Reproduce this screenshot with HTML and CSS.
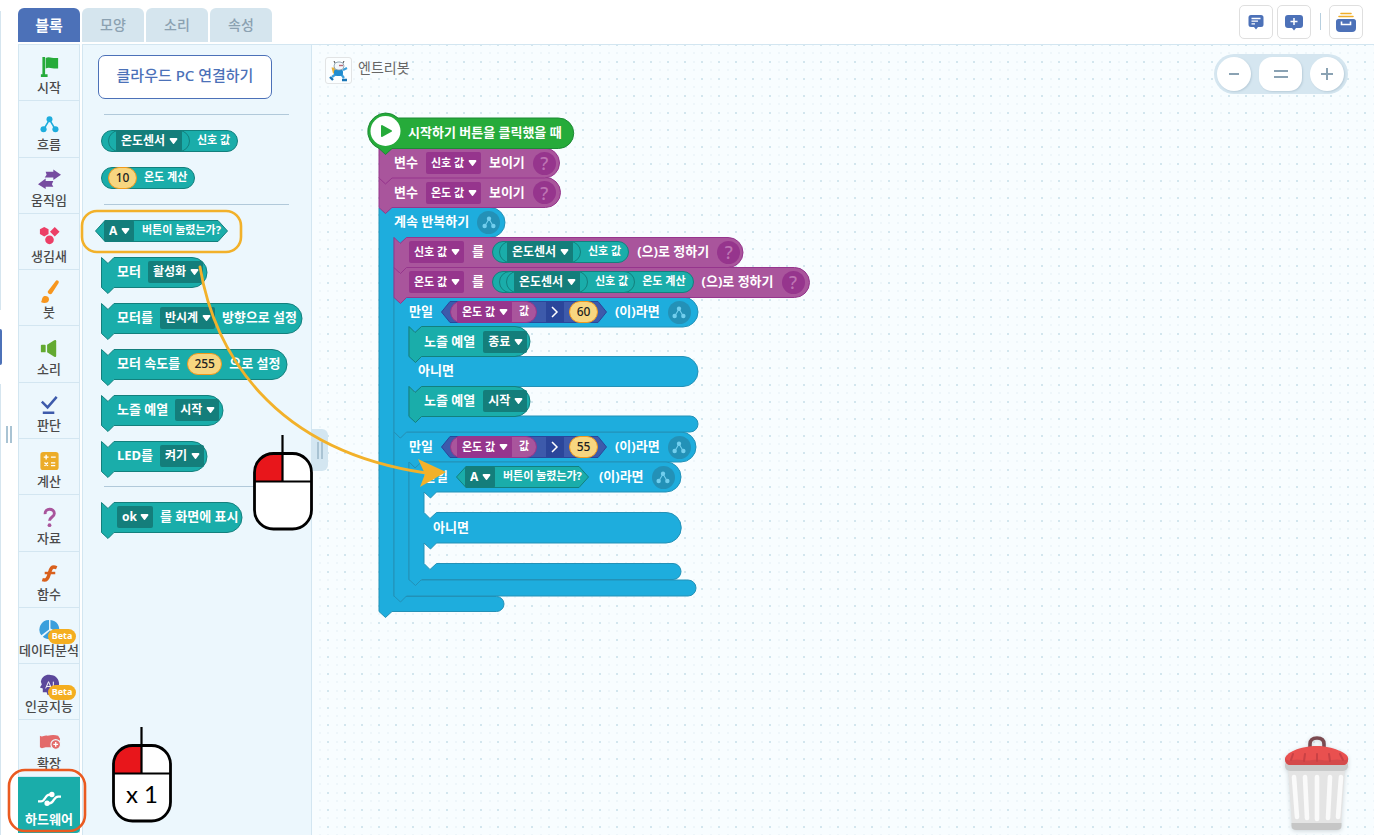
FILE: index.html
```html
<!DOCTYPE html>
<html lang="ko">
<head>
<meta charset="utf-8">
<title>엔트리 블록 코딩</title>
<link rel="stylesheet" href="styles.css">
</head>
<body>
<svg class="defs" aria-hidden="true">
  <symbol id="flow" viewBox="0 0 20 18"><path d="M10 4 4 14M10 4l6 10" stroke="currentColor" stroke-width="1.600" fill="none"/><circle cx="10" cy="3.600" r="3.100" fill="currentColor"/><circle cx="3.800" cy="14" r="3.200" fill="currentColor"/><circle cx="16.200" cy="14" r="3.200" fill="currentColor"/></symbol>
  <symbol id="mouse" viewBox="0 0 60 96"><rect x="1.500" y="18.500" width="57" height="75.500" rx="18" fill="#fff"/><path d="M29.500 18.500H20A18.500 18.500 0 0 0 1.500 37v9h28z" fill="#e8161b"/><rect x="1.500" y="18.500" width="57" height="75.500" rx="19" fill="none" stroke="#000" stroke-width="2.800"/><path d="M29.500 0v46M1 46.500h58" stroke="#000" stroke-width="2.200" fill="none"/></symbol>
</svg>

<div class="app">
  <aside class="edge"><span class="edge-panel"></span><span class="edge-active"></span><span class="edge-panel"></span><button class="grip" aria-label="무대 크기 조절"></button></aside>

  <div class="main">
    <header class="top">
      <nav class="tabs">
        <button class="tab active">블록</button><button class="tab">모양</button><button class="tab">소리</button><button class="tab">속성</button>
      </nav>
      <div class="actions">
        <button class="tool" aria-label="메모"><svg width="18" height="16" viewBox="0 0 18 16"><path d="M4 1h10a2.500 2.500 0 0 1 2.500 2.500v7A2.500 2.500 0 0 1 14 13h-3l-2 2.500L7 13H4a2.500 2.500 0 0 1-2.500-2.500v-7A2.500 2.500 0 0 1 4 1z" fill="#4c71b8"/><path d="M4.500 4.500h9M4.500 7.200h6.500M4.500 9.800H8" stroke="#fff" stroke-width="1.300"/></svg></button>
        <button class="tool" aria-label="메모 추가"><svg width="20" height="17" viewBox="0 0 20 17"><path d="M4 1h12a3 3 0 0 1 3 3v7a3 3 0 0 1-3 3h-4l-2 2.500L8 14H4a3 3 0 0 1-3-3V4a3 3 0 0 1 3-3z" fill="#4c71b8"/><path d="M10 4v7M6.500 7.500h7" stroke="#fff" stroke-width="1.500"/></svg></button>
        <span class="divider"></span>
        <button class="tool" aria-label="나의 보관함"><svg width="20" height="21" viewBox="0 0 20 21"><path d="M5 1.500h10M3 4.500h14" stroke="#f0ae29" stroke-width="1.600" stroke-linecap="round"/><path d="M2.500 7h15q2.500 0 2.500 2.500V16q0 4-4 4H4q-4 0-4-4V9.500Q0 7 2.500 7z" fill="#4c71b8"/><path d="M5.500 9.500v3h9v-3" stroke="#fff" stroke-width="1.600" fill="none"/></svg></button>
      </div>
    </header>

    <div class="editor">
      <nav class="cats">
        <button class="cat"><svg viewBox="0 0 24 24"><path d="M6 2v20M3 21.500h7" stroke="#26ab3a" stroke-width="2.800"/><path d="M8 3c4-2 7 1 13 0v11c-5 1-9-2-13 0z" fill="#26ab3a"/></svg>시작</button>
        <button class="cat"><svg viewBox="0 0 24 24" color="#1eaddd"><use href="#flow" x="2" y="4" width="20" height="18"/></svg>흐름</button>
        <button class="cat"><svg viewBox="0 0 24 24" fill="#764ba0"><path d="M8 4h8V1.500L24 7l-8 5.500V10H7l2-3zM16 13.500H8V11L0 17l8 5v-2.500h8L14.500 17z"/></svg>움직임</button>
        <button class="cat"><svg viewBox="0 0 24 24" fill="#ec3f66"><path d="m6.500 3 4.500 2.500v5L6.500 13 2 10.500v-5zM17.500 3l5 5-5 5-5-5z"/><circle cx="12" cy="16.500" r="4.500"/></svg>생김새</button>
        <button class="cat"><svg viewBox="0 0 24 24" fill="#f7961e"><path d="M18.500 1c1-1.500 4 0 3 2l-7 11c-1.500 2-5.500 0-4-2.500zM3 23c1.500-1 .5-3 2-5 1.500-2.500 6.500-1.500 6.500 2 0 4-5 5-8.500 3z"/></svg>붓</button>
        <button class="cat"><svg viewBox="0 0 24 24" fill="#63aa31"><rect x="3" y="8" width="5" height="8" rx="1"/><path d="M9.500 8 17 3.500q2-1 2 1v15q0 2-2 1L9.500 16z"/></svg>소리</button>
        <button class="cat"><svg viewBox="0 0 24 24" fill="none" stroke="#3d5aab" stroke-width="2.600"><path d="m4 9 6 6L19.500 4M5 20.500h12"/></svg>판단</button>
        <button class="cat"><svg viewBox="0 0 24 24"><rect x="2.500" y="3" width="19" height="19" rx="3" fill="#ecac29"/><path d="M6 8.500h5M8.500 6v5M13.500 8.500h5M6.800 14l3.600 3.600M10.400 14l-3.600 3.600M13.500 14.500h4.500M13.500 17.300h4.500" stroke="#fff" stroke-width="1.400"/></svg>계산</button>
        <button class="cat"><svg viewBox="0 0 24 24"><path d="M7.500 8.500c-1-7 10-6.500 9.500-.5 0 3.500-5 3.500-5 7.500" fill="none" stroke="#a9559c" stroke-width="3"/><circle cx="12" cy="20" r="2" fill="#a9559c"/></svg>자료</button>
        <button class="cat"><svg viewBox="0 0 24 24" fill="none" stroke="#d9601c"><path d="M19.500 6c-6-2.500-6.500 2-8 7-1 4-2.500 7-7 5.500" stroke-width="3.600"/><path d="M7 11.500h11" stroke-width="2.600"/></svg>함수</button>
        <button class="cat"><svg viewBox="0 0 24 24" fill="#3b9fdc"><path d="M11.500 12V2A10 10 0 0 0 3.500 18zM13 11V2a10 10 0 0 1 8.500 13.500zM12.500 13l8 4A10 10 0 0 1 5 19.500z"/></svg><i class="beta">Beta</i>데이터분석</button>
        <button class="cat"><svg viewBox="0 0 24 24"><path d="M3 8C4 2 9 0 13 1c6 0 9 5 9 9 0 5-3 7-3 12h-9l-1-3H5v-4l-3-1 2-3z" fill="#5b489b"/><path d="m8 15 3-7 3 7M9 13h4M16 8v7" stroke="#fff" fill="none"/></svg><i class="beta">Beta</i>인공지능</button>
        <button class="cat"><svg viewBox="0 0 24 24"><path d="M2 5c3 2 4-1 8 0 4-1 8-1 11 0l2 3-1 9H8l-4 1-2-1z" fill="#e36a6a"/><circle cx="18.500" cy="14" r="5" fill="#e36a6a" stroke="#ecf7fd" stroke-width="1.200"/><path d="M18.500 11.500v5M16 14h5" stroke="#fff" stroke-width="1.400"/></svg>확장</button>
        <button class="cat selected"><svg viewBox="0 0 24 24" fill="none" stroke="#fff" stroke-width="2.400"><path d="M0 15h3c5 0 4-7 9-7h2M24 10h-3c-5 0-4 7-9 7h-2"/><circle cx="14.500" cy="7.800" r="1.600" fill="#fff"/><circle cx="9.500" cy="17" r="1.600" fill="#fff"/></svg>하드웨어</button>
      </nav>

      <section class="palette">
        <button class="cloud">클라우드 PC 연결하기</button>
        <hr>
        <div class="pill teal"><div class="pill teal"><select aria-label="센서"><option>온도센서</option></select></div><span>신호 값</span></div>
        <div class="pill teal second"><input class="num" aria-label="온도 값" value="10"><span>온도 계산</span></div>
        <hr>
        <div class="hex button-hex"><svg width="133" height="22"><path class="c-teal" d="M.5 11 10 .5h113L132.500 11 123 21.500H10z"/></svg><div class="hex-body teal"><select aria-label="버튼"><option>A</option></select><span>버튼이 눌렸는가?</span></div></div>

        <div class="stmts">
        <div class="stmt teal"><svg><path class="c-teal" d="M.5.5 7 6.500l6-6h78a15 15 0 0 1 0 30H13l-6 6-6.500-6z"/></svg><div class="body"><span>모터</span><select aria-label="상태"><option>활성화</option></select></div></div>
        <div class="stmt teal"><svg><path class="c-teal" d="M.5.5 7 6.500l6-6h173a15 15 0 0 1 0 30H13l-6 6-6.500-6z"/></svg><div class="body"><span>모터를</span><select aria-label="방향"><option>반시계</option></select><span>방향으로 설정</span></div></div>
        <div class="stmt teal"><svg><path class="c-teal" d="M.5.5 7 6.500l6-6h158a15 15 0 0 1 0 30H13l-6 6-6.500-6z"/></svg><div class="body"><span>모터 속도를</span><input class="num wide" aria-label="속도" value="255"><span>으로 설정</span></div></div>
        <div class="stmt teal"><svg><path class="c-teal" d="M.5.5 7 6.500l6-6h94a15 15 0 0 1 0 30H13l-6 6-6.500-6z"/></svg><div class="body"><span>노즐 예열</span><select aria-label="예열"><option>시작</option></select></div></div>
        <div class="stmt teal"><svg><path class="c-teal" d="M.5.5 7 6.500l6-6h78a15 15 0 0 1 0 30H13l-6 6-6.500-6z"/></svg><div class="body"><span>LED를</span><select aria-label="LED"><option>켜기</option></select></div></div>
        </div>
        <hr>
        <div class="stmt teal"><svg><path class="c-teal" d="M.5.5 7 6.500l6-6h113a15 15 0 0 1 0 30H13l-6 6-6.500-6z"/></svg><div class="body"><select aria-label="화면 문구"><option>ok</option></select><span>를 화면에 표시</span></div></div>
      </section>

      <main class="board">
        <button class="splitter grip" aria-label="블록 꾸러미 접기"></button>
        <div class="object">
          <span class="thumb"><svg width="22" height="22" viewBox="0 0 22 22"><path d="m8 14-4 3M13 14l3 4M15 10l4-2" stroke="#3b9fdc" stroke-width="2.200" fill="none"/><path d="M3.500 7.500h4v6H5z" fill="#e8b23c"/><rect x="6" y="9" width="9" height="7" rx="3" fill="#1f8ccf"/><path d="M7 3 6 1M15 3l1-2" stroke="#444"/><rect x="6" y="2" width="10" height="8" rx="4" fill="#f3f8fb" stroke="#7d95a3" stroke-width=".8"/><path d="M11 5.500h4" stroke="#b56a78" stroke-width="1.400"/><path d="m2 17 3 3M14 20h5" stroke="#1673b5" stroke-width="2.400"/></svg></span>
          <span>엔트리봇</span>
        </div>
        <div class="zoomer">
          <button aria-label="축소"><svg width="14" height="14"><path d="M2 7h10"/></svg></button>
          <button class="reset" aria-label="원래 크기"><svg width="14" height="14"><path d="M0 4h14M0 10h14"/></svg></button>
          <button aria-label="확대"><svg width="14" height="14"><path d="M1 7h12M7 1v12"/></svg></button>
        </div>

        <div class="script">
          <svg class="shapes" width="446" height="508" viewBox="366 112 446 508">
            <path class="c-blue" d="M379 207.500l6.500 6 6-6H490a15 15 0 0 1 0 30H406.500l-6 6-6.500-6V596.500H496.500a7.500 7.500 0 0 1 0 15H392l-6.500 6-6.500-6z"/>
            <path class="c-blue" d="M394 432l6 6 6.500-6H681a15 15 0 0 1 0 30H421.500l-6 6-6.500-6V580H688a8 8 0 0 1 0 16H406.500l-6 6-6.500-6z"/>
            <path class="c-blue" d="M409 462l6 6 6.500-6H666a15 15 0 0 1 0 30H436.500l-6 6-6.500-6v20.500l6 6 6.500-6H666a15 15 0 0 1 0 30.500H436.500l-6 6-6.500-6v20.500l6 6 6.500-6H673a8 8 0 0 1 0 16H421.500l-6 6-6.500-6z"/>
            <path class="c-blue" d="M394 297l6 6 6.500-6H683a15 15 0 0 1 0 30H421.500l-6 6-6.500-6V356.500H683a15 15 0 0 1 0 30H421.500l-6 6-6.500-6V416H690a8 8 0 0 1 0 16H406.500l-6 6-6.500-6z"/>
            <path class="c-teal" d="M409 386.500l6 6 6.500-6H515a15 15 0 0 1 0 30H421.500l-6 6-6.500-6z"/>
            <path class="c-teal" d="M409 326.500l6 6 6.500-6H515a15 15 0 0 1 0 30H421.500l-6 6-6.500-6z"/>
            <path class="c-purple" d="M394 267.500l6 6 6.500-6H794.500a15 15 0 0 1 0 30H406.500l-6 6-6.500-6z"/>
            <path class="c-purple" d="M394 237.500l6 6 6.500-6H728a15 15 0 0 1 0 30H406.500l-6 6-6.500-6z"/>
            <path class="c-purple" d="M379 177.500l6.500 6 6-6H545.500a15 15 0 0 1 0 30H392l-6.500 6-6.500-6z"/>
            <path class="c-purple" d="M379 148l6.500 6 6-6H544.500a15 15 0 0 1 0 30H392l-6.500 6-6.500-6z"/>
            <path class="c-green" d="M385.500 113A18.500 18.500 0 0 1 398 118H558.500a15 15 0 0 1 0 30.500H392l-6.500 6-6.500-6A18.500 18.500 0 0 1 385.500 113z"/>
            <circle cx="385.500" cy="131" r="15" fill="#fff"/><path d="m382 126 9 5-9 5z" fill="#26ab3a" stroke="#26ab3a" stroke-width="2" stroke-linejoin="round"/>
          </svg>
          <div class="rows">
            <div class="row start"><span>시작하기 버튼을 클릭했을 때</span></div>
            <div class="row d0 purple"><span>변수</span><select class="var" aria-label="변수"><option>신호 값</option></select><span>보이기</span><i class="help">?</i></div>
            <div class="row d0 purple"><span>변수</span><select class="var" aria-label="변수"><option>온도 값</option></select><span>보이기</span><i class="help">?</i></div>
            <div class="row d0"><span>계속 반복하기</span><i class="mark"><svg><use href="#flow"/></svg></i></div>
            <div class="row d1 purple"><select class="var" aria-label="변수"><option>신호 값</option></select><span>를</span><div class="pill teal"><div class="pill teal"><select aria-label="센서"><option>온도센서</option></select></div><span>신호 값</span></div><span>(으)로 정하기</span><i class="help">?</i></div>
            <div class="row d1 purple"><select class="var" aria-label="변수"><option>온도 값</option></select><span>를</span><div class="pill teal"><div class="pill teal"><div class="pill teal"><select aria-label="센서"><option>온도센서</option></select></div><span>신호 값</span></div><span>온도 계산</span></div><span>(으)로 정하기</span><i class="help">?</i></div>
            <div class="row d1"><span>만일</span><div class="hex compare"><svg width="166" height="22"><path class="c-navy" d="M.5 11 9 .5h148L165.500 11 157 21.500H9z"/></svg><div class="hex-body"><div class="pill purple"><select aria-label="변수"><option>온도 값</option></select><span>값</span></div><b class="op"><svg width="8" height="12"><path d="m1 1 5 5-5 5"/></svg></b><input class="num" aria-label="비교 값" value="60"></div></div><span>(이)라면</span><i class="mark"><svg><use href="#flow"/></svg></i></div>
            <div class="row d2 teal"><span>노즐 예열</span><select aria-label="예열"><option>종료</option></select></div>
            <div class="row else1"><span>아니면</span></div>
            <div class="row d2 teal"><span>노즐 예열</span><select aria-label="예열"><option>시작</option></select></div>
            <div class="row"></div>
            <div class="row d1"><span>만일</span><div class="hex compare"><svg width="166" height="22"><path class="c-navy" d="M.5 11 9 .5h148L165.500 11 157 21.500H9z"/></svg><div class="hex-body"><div class="pill purple"><select aria-label="변수"><option>온도 값</option></select><span>값</span></div><b class="op"><svg width="8" height="12"><path d="m1 1 5 5-5 5"/></svg></b><input class="num" aria-label="비교 값" value="55"></div></div><span>(이)라면</span><i class="mark"><svg><use href="#flow"/></svg></i></div>
            <div class="row d2"><span>만일</span><div class="hex"><svg width="133" height="22"><path class="c-teal" d="M.5 11 10 .5h113L132.500 11 123 21.500H10z"/></svg><div class="hex-body teal"><select aria-label="버튼"><option>A</option></select><span>버튼이 눌렸는가?</span></div></div><span>(이)라면</span><i class="mark"><svg><use href="#flow"/></svg></i></div>
            <div class="row"></div>
            <div class="row else2"><span>아니면</span></div>
          </div>
        </div>

        <button class="trash" aria-label="휴지통"><svg width="66" height="98" viewBox="0 0 66 98">
          <path d="M26 14v-4q0-6 7-6t7 6v4" fill="none" stroke="#7b4a50" stroke-width="3.600"/>
          <path d="M4 34h57l-4 58q0 3-4 3H12q-4 0-4-3z" fill="#e4e4e4"/>
          <path d="M7.500 89h50v3q0 4-5 4h-40q-5 0-5-4z" fill="#c6c6c6"/>
          <path d="M10 43l3 40M21 43l2 41M33 43v42M46 43l-2 41M57 43l-3 40" stroke="#fafafa" stroke-width="4.600" stroke-linecap="round"/>
          <rect x="1" y="26" width="63" height="11" rx="5" fill="#c9caca"/>
          <path d="M33 12c15 0 31 7 31 12v2c0 3-2 5-5 5H7c-4 0-6-2-6-6 0-6 15-13 32-13z" fill="#e9504f"/>
          <path d="M1 23c1 4 4 4 7 3q5-1 10 0t10 0 10 0 10 0 10 0 6-3v2c0 3-2 6-5 6H7c-4 0-6-2-6-8z" fill="#d44a4b"/>
          <path d="M9 20l-2 6M21 20l-1 7M33 20v7M45 20l1 7M56 20l3 6" stroke="#c94145" stroke-width="2" stroke-linecap="round"/></svg></button>
      </main>
    </div>
  </div>

  <svg class="annotations" width="460" height="835" viewBox="0 0 460 835">
    <rect x="82" y="211" width="159" height="41" rx="15" fill="none" stroke="#f2b12a" stroke-width="2.600"/>
    <rect x="9" y="770" width="76" height="61" rx="16" fill="none" stroke="#ea5a20" stroke-width="2.600"/>
    <use href="#mouse" x="253" y="435" width="60" height="96"/>
    <use href="#mouse" x="112" y="727" width="60" height="96"/>
    <text x="142" y="803" class="count">x 1</text>
    <path d="M200 267C214 350 270 450 426 473" fill="none" stroke="#f2b12a" stroke-width="2.800" stroke-linecap="round"/>
    <path d="m418 459 28 13-26 15 5-13z" fill="#f2b12a"/>
  </svg>
</div>
</body>
</html>
```
FILE: styles.css
```css
*, *::before { box-sizing: border-box; }
body { margin: 0; background: #fff; color: #4a4a4a; font: 13px/20px "Noto Sans", "Noto Sans CJK KR", sans-serif; }
button, select, input { font: inherit; color: inherit; margin: 0; padding: 0; border: 0; background: none; border-radius: 0; }
button { cursor: pointer; }
i { font-style: normal; }
svg { display: block; flex: none; }
.defs { position: absolute; width: 0; height: 0; }

.app { position: relative; display: flex; height: 100vh; min-height: 700px; overflow: hidden; }

.edge { position: relative; width: 18px; display: flex; flex-direction: column; gap: 19px; padding-top: 11px; }
.edge-panel { width: 1px; height: 299px; background: #d5e5ef; }
.edge-panel:nth-of-type(3) { flex: 1; }
.edge-active { width: 2px; height: 36px; background: #4c71b8; border-radius: 0 2px 2px 0; }
.grip::before { content: ""; display: block; width: 6px; height: 17px; margin: auto; border: solid #a9c3d3; border-width: 0 2px; }
.edge .grip { position: absolute; left: 6px; top: 426px; }

.main { flex: 1; display: flex; flex-direction: column; min-width: 0; }
.top { display: flex; justify-content: space-between; height: 45px; padding: 5px 11px 0 0; }
.tabs { display: flex; gap: 2px; padding: 3px 0; }
.tab { width: 62px; height: 34px; background: #d5e5ee; color: #8ba1b1; font-size: 14px; font-weight: 500; border-radius: 6px 6px 0 0; }
.tab.active { background: #4c71b8; color: #fff; font-size: 15px; font-weight: 700; }
.actions { display: flex; gap: 4px; }
.tool { width: 34px; height: 34px; border: 1px solid #dfdfdf; border-radius: 5px; display: grid; place-items: center; background: #fff; }
.divider { width: 1px; height: 17px; margin: 8px 4px 0 5px; background: #b7cfdf; }

.editor { flex: 1; display: flex; min-height: 0; }
.cats { width: 62px; margin: -1px 2px 2px 0; display: grid; grid-auto-rows: 1fr; background: #ecf7fd; border: solid #d3e6f1; border-width: 1px 1px 0; }
.cat { position: relative; display: flex; flex-direction: column; align-items: center; justify-content: flex-end; padding-bottom: 3px; border-bottom: 1px solid #d3e6f1; white-space: nowrap; font-weight: 500; line-height: 19px; min-width: 0; }
.cat svg { width: 23px; height: 23px; }
.cat.selected { background: #1aadaa; color: #fff; font-weight: 700; padding-bottom: 4px; margin: 0 -1px; border: 0; border-radius: 0 0 4px 0; }
.beta { position: absolute; right: 3px; top: 21px; width: 28px; height: 15px; border-radius: 8px; background: #f4ae20; color: #fff; font-size: 9px; line-height: 14px; font-weight: 700; }

.palette { width: 230px; margin-top: -1px; padding: 10px 22px 0 18px; background: #ecf7fd; border: 1px solid #d3e6f1; border-bottom: 0; }
.palette hr { height: 1px; border: 0; background: #b1c9da; margin: 15px 0 15px 3px; }
.cloud { display: block; width: 174px; height: 44px; margin-left: -3px; border: 1px solid #4c71b8; border-radius: 7px; background: #fff; color: #4c71b8; font-size: 15px; font-weight: 500; padding-bottom: 4px; }

.c-teal { fill: #1aadaa; stroke: #13807d; }
.c-blue { fill: #1eaddd; stroke: #2391b7; }
.c-purple { fill: #a9559c; stroke: #96358d; }
.c-green { fill: #26ab3a; stroke: #1d8a35; }
.c-navy { fill: #3d5aab; stroke: #2b469a; }
.teal { --fill: #1aadaa; --line: #13807d; --dark: #147e7b; }
.purple { --fill: #a9559c; --line: #96358d; --dark: #96358d; }

select { appearance: none; height: 22px; padding: 0 16px 0 5px; color: #fff; font-size: 12px; font-weight: 700; line-height: 20px; border-radius: 2px; background: var(--dark) url("data:image/svg+xml,%3Csvg xmlns='http://www.w3.org/2000/svg' width='9' height='8'%3E%3Cpath d='M1.500 2h6L4.500 6z' fill='white' stroke='white' stroke-width='1.800' stroke-linejoin='round'/%3E%3C/svg%3E") no-repeat right 4px center; }
.var, .purple > select { font-size: 11px; }
.num { width: 29px; height: 22px; border: 1px solid #f29a1c; border-radius: 11px; background: #f7d680; color: #222; text-align: center; font-size: 12px; font-weight: 500; padding-bottom: 1px; }
.num.wide { width: 35px; }

.pill { display: flex; align-items: center; gap: 7px; width: max-content; height: 22px; padding: 0 7px 0 6px; border: 1px solid var(--line); border-radius: 11px; background: var(--fill); color: #fff; font-size: 11px; font-weight: 700; white-space: nowrap; }
.pill .pill { padding-right: 6px; }
.pill > .pill, .pill > .num, .pill > select { margin-top: -1px; margin-bottom: -1px; }
.pill .pill > select { margin-left: 1px; margin-right: 1px; }
.pill > span, .hex-body > span { padding-bottom: 2px; }
.pill.second { margin-top: 15px; }
.hex { display: grid; width: max-content; color: #fff; font-size: 11px; font-weight: 700; white-space: nowrap; }
.hex > svg, .hex-body { grid-area: 1 / 1; }
.hex-body { display: flex; align-items: center; gap: 8px; padding: 0 9px; }
.button-hex { margin-left: -6px; }
.compare .hex-body { gap: 5px; padding-right: 8px; }
.op { width: 18px; height: 22px; margin-left: 4px; background: #2b469a; display: grid; place-items: center; }
.op path { fill: none; stroke: #fff; stroke-width: 1.5; }

.stmts { display: grid; gap: 16px; margin-top: 15px; }
.stmt { display: grid; width: max-content; height: 30px; }
.stmt > svg { grid-area: 1 / 1; width: 1px; height: 30px; overflow: visible; }
.body { grid-area: 1 / 1; display: flex; align-items: center; gap: 7px; padding-left: 16px; color: #fff; font-weight: 700; white-space: nowrap; }
.body > span, .row > span { padding-bottom: 2px; }

.board { position: relative; flex: 1; min-width: 0; background-color: #f8fdff; background-position: 15px 16px, 7px 16px, 15px 7px, 7px 7px; background-size: 17px 17px;
  background-image: conic-gradient(from 270deg at 2px 2px, #d3e6ee 90deg, transparent 0), conic-gradient(from 270deg at 2px 2px, #eef6fa 90deg, transparent 0), conic-gradient(from 270deg at 2px 2px, #eef6fa 90deg, transparent 0), conic-gradient(from 270deg at 2px 2px, #eef6fa 90deg, transparent 0);
  border-top: 1px solid #d3e6f1; margin-top: -1px; }
.splitter { position: absolute; left: -1px; top: 384px; width: 17px; height: 42px; background: #d3e6f1; border-radius: 0 6px 6px 0; }
.object { display: flex; align-items: center; gap: 6px; padding: 12px 0 0 13px; font-size: 14px; color: #666; }
.thumb { width: 27px; height: 27px; border: 1px solid #e2e4e5; border-radius: 3px; display: grid; place-items: center; background: #fbfeff; }
.object span:last-child { padding-bottom: 6px; }
.zoomer { position: absolute; right: 26px; top: 9px; display: flex; gap: 8px; padding: 3px 4px 3px 3px; border-radius: 20px; background: #d5e6f0; }
.zoomer button { width: 34px; height: 34px; border-radius: 17px; background: #fff; display: grid; place-items: center; box-shadow: 1px 1px 2px #b9cdda; }
.zoomer .reset { width: 43px; border-radius: 13px; }
.zoomer path { stroke: #8aa2b3; stroke-width: 2; }

.script { position: absolute; left: 54px; top: 67px; display: grid; color: #fff; font-weight: 700; white-space: nowrap; }
.shapes, .rows { grid-area: 1 / 1; }
.rows { display: grid; align-content: start; padding-top: 6px; grid-template-rows: 30px 30px 29px 30px 30px 30px 30px 29px 30px 30px 16px 30px 30px 21px 30px; }
.row { display: flex; align-items: center; gap: 8px; }
.start { padding-left: 42px; }
.d0 { padding-left: 28px; }
.d1 { padding-left: 43px; }
.d2 { padding-left: 58px; }
.else1 { padding-left: 52px; }
.else2 { padding-left: 67px; }
.help, .mark { width: 23px; height: 23px; border-radius: 12px; display: grid; place-items: center; }
.help { background: #96358d; color: #bd74b3; font-size: 18px; font-weight: 500; }
.mark { background: #2391b7; color: #72cfee; }
.mark svg { width: 14px; height: 13px; }

.trash { position: absolute; right: 24px; bottom: 3px; filter: drop-shadow(0 1px 2px #cdd5d9); }
.annotations { position: absolute; left: 0; top: 0; pointer-events: none; }
.count { font: 400 24px Lato, sans-serif; text-anchor: middle; fill: #000; }
```
